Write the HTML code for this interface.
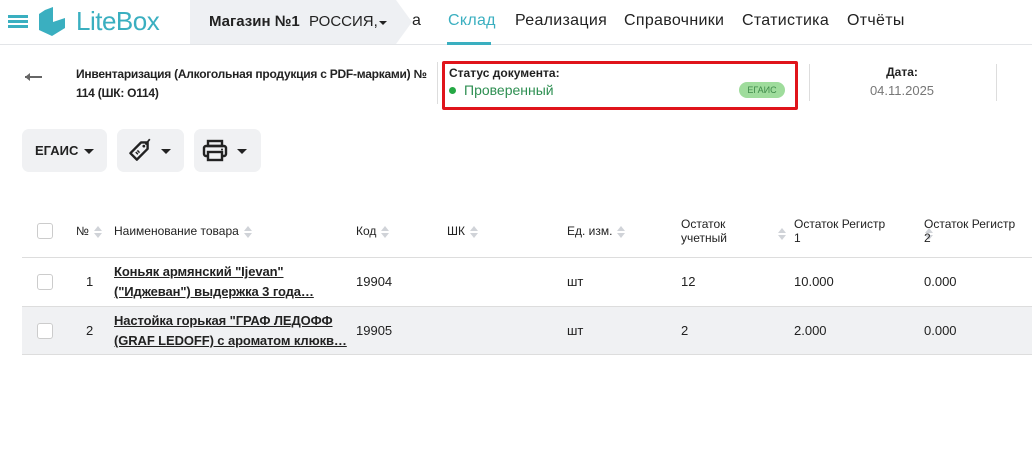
<!DOCTYPE html>
<html><head><meta charset="utf-8"><style>
*{margin:0;padding:0;box-sizing:border-box}
body{width:1032px;height:475px;background:#fff;font-family:"Liberation Sans",sans-serif;color:#222;position:relative;overflow:hidden}
.a{position:absolute}
.nav{font-size:16px;top:12px;color:#222;letter-spacing:0.3px}
.btn{position:absolute;top:129px;height:43px;background:#f0f1f3;border-radius:7px}
.caret{position:absolute;width:0;height:0;border-left:5px solid transparent;border-right:5px solid transparent;border-top:5px solid #222}
.th{position:absolute;font-size:12px;color:#222}
.sort{display:inline-block;vertical-align:middle;margin-left:5px;width:8px;height:12px;position:relative}
.sort:before{content:"";position:absolute;top:0;left:0;border-left:4px solid transparent;border-right:4px solid transparent;border-bottom:5px solid #d0d3d8}
.sort:after{content:"";position:absolute;bottom:0;left:0;border-left:4px solid transparent;border-right:4px solid transparent;border-top:5px solid #d0d3d8}
.cb{position:absolute;left:37px;width:16px;height:16px;border:1.5px solid #ccc;border-radius:3px;background:#fff}
.td{position:absolute;font-size:13px;color:#222}
.lnk{position:absolute;left:114px;font-size:13px;font-weight:bold;text-decoration:underline;line-height:20px;color:#222;width:240px;height:40px;overflow:hidden;letter-spacing:-0.1px}
</style></head><body>
<!-- header -->
<div class="a" style="left:0;top:44px;width:1032px;height:1px;background:#e3e5e8"></div>
<div class="a" style="left:8px;top:15px;width:20px;height:3px;background:#3aafc0;box-shadow:0 5px 0 #3aafc0,0 10px 0 #3aafc0"></div>
<svg class="a" style="left:37px;top:6px" width="30" height="32" viewBox="0 0 30 32"><path d="M8 4 L16 1 L16 16 L28 12 L28 22 L15 30 L2 24 L2 8 Z" fill="#3aafc0"/></svg>
<div class="a" style="left:76px;top:6px;font-size:26px;color:#3aafc0;letter-spacing:-0.5px">LiteBox</div>
<div class="a" style="left:190px;top:0;width:206px;height:44px;background:#eef0f3"></div>
<svg class="a" style="left:396px;top:0" width="18" height="44"><path d="M0 0 L16 22 L0 44 Z" fill="#eef0f3"/></svg>
<div class="a" style="left:209px;top:13px;font-size:15px;font-weight:bold">Магазин №1</div>
<div class="a" style="left:309px;top:13px;font-size:15px">РОССИЯ,</div>
<div class="caret" style="left:379px;top:21px;border-width:4px 4px 0 4px"></div>
<div class="a nav" style="left:412px">а</div>
<div class="a nav" style="left:448px;color:#3aafc0">Склад</div>
<div class="a" style="left:447px;top:42px;width:44px;height:3px;background:#3aafc0"></div>
<div class="a nav" style="left:515px">Реализация</div>
<div class="a nav" style="left:624px">Справочники</div>
<div class="a nav" style="left:742px">Статистика</div>
<div class="a nav" style="left:847px">Отчёты</div>
<!-- doc header -->
<div class="a" style="left:25px;top:76px;width:17px;height:1.5px;background:#666"></div>
<div class="a" style="left:25px;top:73px;width:0;height:0;border-top:4px solid transparent;border-bottom:4px solid transparent;border-right:5px solid #666"></div>
<div class="a" style="left:76px;top:65px;font-size:12px;font-weight:bold;line-height:19px;white-space:nowrap;letter-spacing:-0.25px">Инвентаризация (Алкогольная продукция с PDF-марками) №<br>114 (ШК: О114)</div>
<div class="a" style="left:437px;top:62px;width:1px;height:42px;background:#ddd"></div>
<div class="a" style="left:442px;top:61px;width:356px;height:49px;border:3px solid #e0141b;border-radius:2px"></div>
<div class="a" style="left:449px;top:66px;font-size:12px;font-weight:bold">Статус документа:</div>
<div class="a" style="left:449px;top:87px;width:7px;height:7px;border-radius:50%;background:#25a844"></div>
<div class="a" style="left:464px;top:82px;font-size:14px;color:#2e8f52">Проверенный</div>
<div class="a" style="left:739px;top:82px;width:46px;height:16px;border-radius:8px;background:#9fdc9c;font-size:9px;color:#3f8a4a;text-align:center;line-height:16px">ЕГАИС</div>
<div class="a" style="left:809px;top:64px;width:1px;height:37px;background:#ddd"></div>
<div class="a" style="left:840px;top:65px;width:124px;text-align:center;font-size:12px;font-weight:bold">Дата:</div>
<div class="a" style="left:840px;top:83px;width:124px;text-align:center;font-size:13px;color:#777">04.11.2025</div>
<div class="a" style="left:996px;top:64px;width:1px;height:37px;background:#ddd"></div>
<!-- buttons -->
<div class="btn" style="left:22px;width:85px"><div class="a" style="left:13px;top:14px;font-size:13px;font-weight:bold">ЕГАИС</div><div class="caret" style="left:62px;top:20px"></div></div>
<div class="btn" style="left:117px;width:67px">
<svg class="a" style="left:8px;top:8px" width="28" height="28" viewBox="0 0 26 26"><path d="M15 5 L21 5 L21 11 L11 21 L5 15 Z" fill="none" stroke="#222" stroke-width="2.2" stroke-linejoin="round"/><circle cx="17.5" cy="8.5" r="1.3" fill="#222"/><path d="M19 7 L23 2" stroke="#222" stroke-width="1.6"/><path d="M10 14 L12 16 M11.5 12.5 L13.5 14.5" stroke="#222" stroke-width="1.4"/></svg>
<div class="caret" style="left:44px;top:20px"></div></div>
<div class="btn" style="left:194px;width:67px">
<svg class="a" style="left:8px;top:9px" width="26" height="26" viewBox="0 0 26 24"><rect x="6" y="2" width="14" height="5" fill="none" stroke="#222" stroke-width="2.4"/><rect x="2" y="7" width="22" height="10" rx="2" fill="none" stroke="#222" stroke-width="2.4"/><rect x="6" y="13" width="14" height="8" fill="#f0f1f3" stroke="#222" stroke-width="2.4"/><circle cx="20" cy="10.5" r="1" fill="#222"/></svg>
<div class="caret" style="left:43px;top:20px"></div></div>
<!-- table -->
<div class="cb" style="top:223px"></div>
<div class="th" style="left:76px;top:224px">№<span class="sort"></span></div>
<div class="th" style="left:114px;top:224px">Наименование товара<span class="sort"></span></div>
<div class="th" style="left:356px;top:224px">Код<span class="sort"></span></div>
<div class="th" style="left:447px;top:224px">ШК<span class="sort"></span></div>
<div class="th" style="left:567px;top:224px">Ед. изм.<span class="sort"></span></div>
<div class="th" style="left:681px;top:217px;line-height:14px">Остаток<br>учетный</div>
<span class="sort a" style="left:773px;top:225px"></span>
<div class="th" style="left:794px;top:217px;line-height:14px">Остаток Регистр<br>1</div>
<span class="sort a" style="left:903px;top:225px"></span>
<div class="th" style="left:924px;top:217px;line-height:14px">Остаток Регистр<br>2</div>
<div class="a" style="left:22px;top:257px;width:1010px;height:1px;background:#ddd"></div>
<div class="cb" style="top:274px"></div>
<div class="td" style="left:86px;top:274px">1</div>
<div class="lnk" style="top:262px">Коньяк армянский "Ijevan"<br>("Иджеван") выдержка 3 года…</div>
<div class="td" style="left:356px;top:274px">19904</div>
<div class="td" style="left:567px;top:274px">шт</div>
<div class="td" style="left:681px;top:274px">12</div>
<div class="td" style="left:794px;top:274px">10.000</div>
<div class="td" style="left:924px;top:274px">0.000</div>
<div class="a" style="left:22px;top:306px;width:1010px;height:49px;background:#f0f1f3;border-top:1px solid #ddd;border-bottom:1px solid #ddd"></div>
<div class="cb" style="top:323px"></div>
<div class="td" style="left:86px;top:323px">2</div>
<div class="lnk" style="top:311px">Настойка горькая "ГРАФ ЛЕДОФФ<br>(GRAF LEDOFF) с ароматом клюкв…</div>
<div class="td" style="left:356px;top:323px">19905</div>
<div class="td" style="left:567px;top:323px">шт</div>
<div class="td" style="left:681px;top:323px">2</div>
<div class="td" style="left:794px;top:323px">2.000</div>
<div class="td" style="left:924px;top:323px">0.000</div>
</body></html>
